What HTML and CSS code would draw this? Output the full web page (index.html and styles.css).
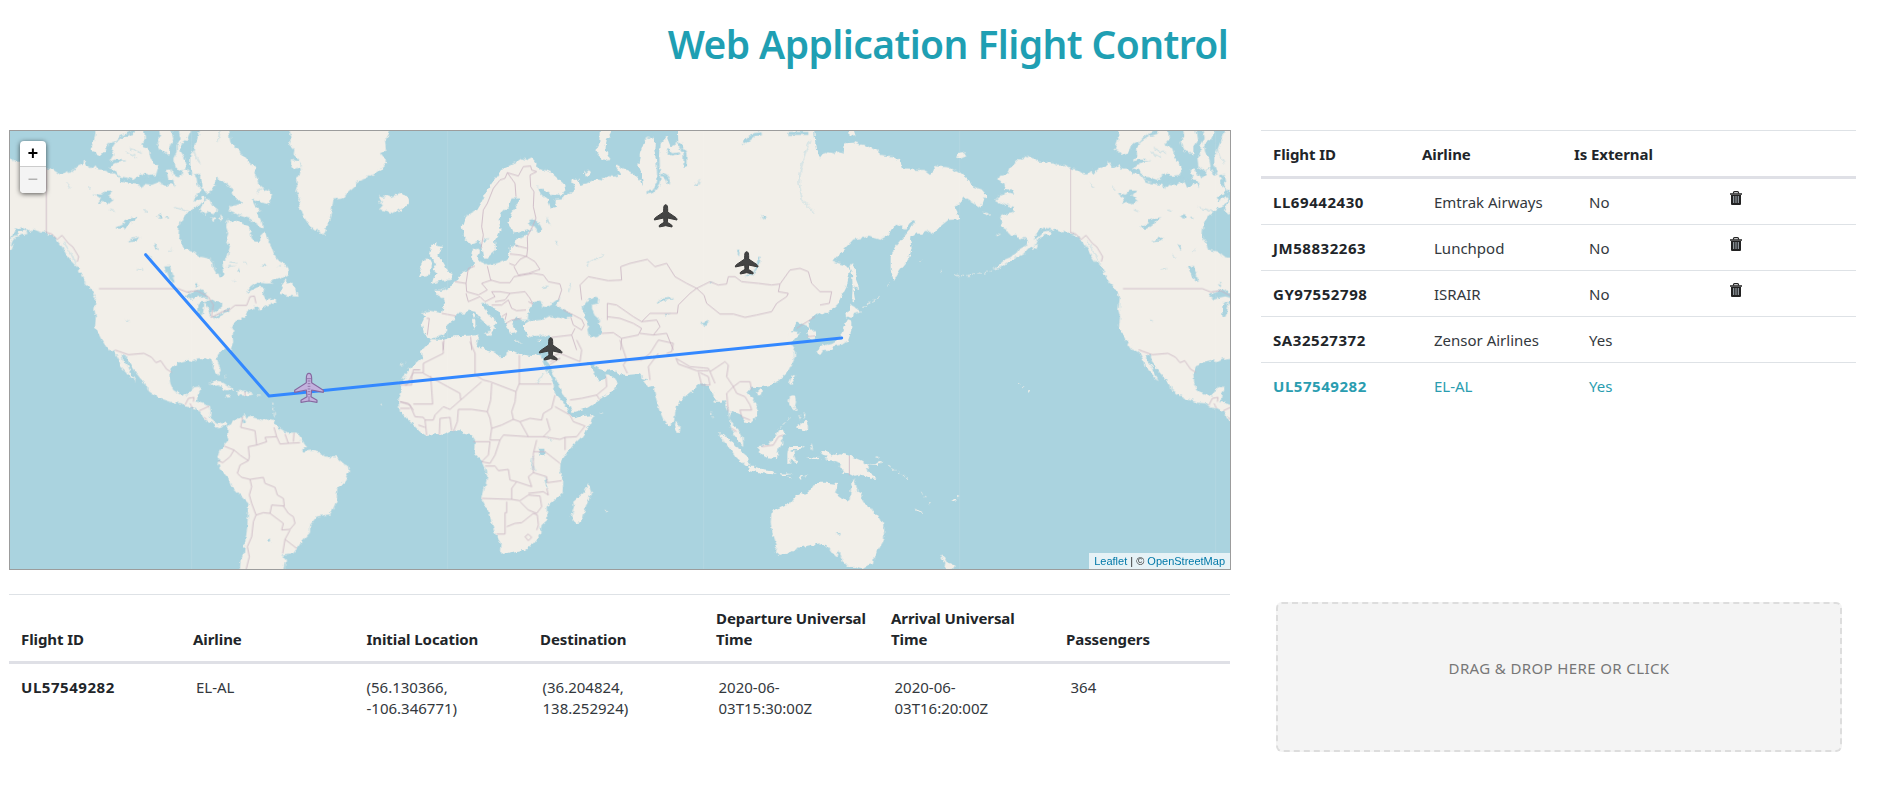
FILE: index.html
```html
<!DOCTYPE html>
<html lang="en">
<head>
<meta charset="utf-8">
<title>Web Application Flight Control</title>
<link rel="stylesheet" href="styles.css">
</head>
<body>
<h1 class="title">Web Application Flight Control</h1>
<main class="layout">
  <section class="left">
    <div class="map">
      <svg class="world" viewBox="30 33 3660 1314" preserveAspectRatio="none">
        <defs>
          <filter id="coast" filterUnits="userSpaceOnUse" x="-120" y="-10" width="3860" height="1380" color-interpolation-filters="sRGB">
            <feTurbulence type="fractalNoise" baseFrequency=".07" numOctaves="2" seed="4"/>
            <feDisplacementMap in="SourceGraphic" scale="15" xChannelSelector="R" yChannelSelector="G"/>
          </filter>
          <g id="america">
            <g class="land">
              <path transform="translate(-612 0)" d="M752 143L735 135 715 137 700 130 690 130 678 125 655 125 650 117 640 115 628 112 620 107 612 114 600 116 580 135 572 142 565 158 555 164 540 168 535 178 548 188 558 195 550 206 575 208 583 224 560 220 540 228 525 240 545 250 560 257 582 260 580 278 555 283 540 290 550 305 543 320 560 330 570 345 590 345 600 360 612 354 625 362 620 375 595 390 590 398 570 412 555 418 540 432 518 450 545 440 560 428 580 418 610 402 625 385 645 375 650 362 660 350 680 345 695 342 688 332 670 335 655 350 640 360 658 330 675 322 700 332 710 328 735 338 753 337z"/>
              <path transform="translate(-612 0)" d="M640 378l15-6-5 14-12 4zM530 340l14 3-10 3zM485 276l15 2 14 8-8 0-16-6z"/>
              <path d="M139 145L160 150 180 163 190 163 205 150 208 160 225 145 250 133 252 122 262 138 275 145 285 135 295 148 320 150 325 160 345 160 355 170 365 185 385 190 415 195 425 208 432 192 455 195 480 185 490 200 500 200 515 190 525 205 520 180 505 178 500 150 512 148 520 165 535 172 545 165 548 150 560 145 570 165 580 160 590 175 592 195 605 205 600 220 578 235 585 245 600 235 610 228 615 235 600 255 580 265 570 275 555 285 538 315 535 350 545 365 552 388 580 395 600 410 625 415 640 425 642 448 650 462 655 460 660 473 670 465 668 440 668 425 682 412 685 400 690 380 678 360 685 340 678 320 683 300 700 306 710 303 728 312 745 318 752 335 755 355 768 365 780 365 782 345 795 338 805 365 818 390 825 410 840 425 855 432 867 450 865 463 845 475 825 480 800 490 770 488 750 503 740 520 755 510 780 500 795 505 790 525 800 543 825 535 830 548 800 556 780 572 775 560 760 562 740 575 735 590 715 600 705 605 692 632 700 665 690 690 325 690 305 660 285 620 288 590 283 570 287 535 278 515 262 490 250 480 235 445 215 425 200 405 185 380 170 360 155 345 139 340z"/>
              <path d="M288 5h105v28L360 50 345 65 325 70 318 90 310 100 295 108 285 95 272 88 285 50zM340 105L335 85 348 65 370 50 400 42 415 5 430 5 435 60 422 75 445 85 452 115 475 140 468 165 445 168 425 160 400 180 380 172 360 170 345 150 328 145 340 132 360 126 380 122 345 118 328 125zM475 5h40v28l5 27-12 20 0 28-13-12-17-5-8-27 10-15zM530 5h42v28l-12 27-20 15 3 20 12 20 5 25-15 12-22-12-3-25 10-20 0-20 12-18zM610 5h75v28l8 40 22 12 8 15 22 25 22 20-4 12 7 15 5 18 20 18 22 12-12 32-22-4-25-10 10 20 16 14-14 5 16 30 3 18-18-12-20-16-38-12-28-12 8-14 32-9-20-20-12-25-20-18-30-18-30-10-30 8-12-30 0-28 14-32zM610 145l30 0 10 20-5 25-10 20-15 10-15-20-5-30zM600 272l12-28 14-8 12 20 17 14-14 10-15-6-12 10zM686 182l16-3 8 12-12 12-12-8zM840 522l6-22 4-16 12-8-2 18 12-4 13 14 8 26-22-2zM790 488l30 4-18-7zM630 290l18 8-8 5zM658 285l10 12-8 6zM250 485l18 4 26 24-14 0z"/>
              <path transform="translate(0 660)" d="M700 -35L697 5 682 18 668 30 655 42 650 55 658 76 662 92 655 104 648 95 640 82 636 65 630 55 605 59 598 54 580 63 560 60 535 68 528 75 515 80 508 100 511 130 520 150 540 163 565 165 575 150 580 142 600 140 600 152 594 160 590 185 605 190 630 198 632 215 630 232 645 245 655 252 665 246 676 248 685 262 672 255 655 262 648 258 638 245 630 250 612 238 600 215 580 205 560 203 545 190 520 188 490 178 460 162 443 150 440 135 425 120 405 95 390 75 380 50 365 42 368 60 385 80 395 105 408 125 395 115 378 95 362 78 358 60 345 36 310 0 290 -35z"/>
            </g>
            <g class="lake">
              <path d="M555 528l18-14 25-5 18 8 10 18-22-6-18 4-15 6zM595 555l12-12 6 10-4 25-6 14-8-6zM612 547l22-8 14 6 16 4-2 14-16 14-10-8-2 20-6-4-2-20zM635 594l32-16 6 2-34 18zM668 574l22-8 2 5-20 8zM492 440l18-2 8 34 4 14-10-4-10-18zM280 220l25 4 12-12 20 0-12 14 16 14-14 10-18-4-18 6 12-16zM350 322l18-8 8-14 20-6 16-2-14 14-16 10-14 10-16 0zM385 365l14-10 24-4-14 10-14 2zM460 372l8 4 6 16-6-2zM583 495l6-6 6 5-6 6zM378 598l12 8-8-2zM680 440l26-4-22 7zM785 435h16l-10 5zM830 440l12-6-8 8zM470 290l14-8 0 12zM495 290l16 2-10 4zM712 455l6-12 0 12z"/>
              <path class="creek" d="M660 33l-6 30M575 70q10 40 25 60M365 178l50 8 40-18 38 12M770 215l18-10 28 10M745 300l28 10M390 85l35 15M380 95l30 18M190 365l20 30 20 40M185 375l15 45M525 262l55 18M200 190l10 15M262 197l12 12M330 270l15 5M430 270l12 4M410 450l20-4M445 405l12 10M505 395l10-8M690 425l22 4M730 425l10 8M700 480l8 8M515 455l8 30"/>
            </g>
          </g>
          <g id="america-borders" class="border">
            <path d="M139 145V337L155 342 172 358 186 346 205 370 218 380 236 410 232 425M297 506H535L560 516 590 512 625 530 640 555 634 592 665 576 690 568 705 556 740 556 750 530 763 528 768 550"/>
            <path transform="translate(0 660)" d="M345 30L385 44 432 40 455 52 468 68 482 62 500 88 516 97M555 195L565 175 582 172 580 185M570 190L578 205M598 212L628 198M612 232L620 238"/>
          </g>
        </defs>
        <g filter="url(#coast)">
        <use href="#america"/>
        <use href="#america" x="3072"/>
        <g class="land">
          <path d="M862 5H1170V33L1155 60 1158 90 1140 100 1160 125 1150 140 1125 160 1100 172 1080 180 1068 188 1065 200 1040 222 1030 235 1000 238 995 270 985 310 970 345 960 340 955 330 945 332 930 320 905 280 895 250 900 235 886 215 892 195 888 180 900 160 905 130 888 108 878 105 880 85 868 75 875 55zM876 120l24 4 4 20-22 6-6-14zM1140 240l-6-12 16 5 6-10 16 8 10-4 20-6 22 8 4 16-18 18-30 18-26-10-14-2 12-14-18-6 14-6z"/>
          <g transform="translate(1200 0)">
            <path d="M72 640L65 610 75 590 65 578 90 572 125 580 132 560 130 535 105 520 104 512 125 512 150 500 160 488 180 470 190 455 208 450 222 432 213 410 216 392 235 385 240 395 230 410 242 425 262 435 290 430 320 418 328 395 330 380 345 378 350 355 380 345 400 325 370 335 338 340 325 310 332 280 355 250 358 235 335 235 325 260 308 275 296 300 302 330 295 345 285 360 288 390 268 408 264 416 250 415 245 385 240 362 215 375 195 355 185 320 195 290 230 270 245 245 265 205 285 175 300 155 330 135 350 125 365 115 380 120 395 112 410 130 408 140 430 150 450 155 490 190 497 210 485 225 450 222 425 205 410 200 425 225 445 240 452 265 470 260 462 240 485 238 490 225 515 220 525 205 512 180 535 175 540 195 560 190 590 175 610 178 620 168 640 170 665 165 645 135 665 142 690 155 720 178 730 200 722 155 715 138 720 100 735 60 750 50 765 60 763 90 770 130 780 110 782 70 800 50 812 80 835 65 832 5H1240L1248 90 1260 115 1275 95 1300 100 1315 95 1330 100 1335 70 1360 65 1375 72 1390 75 1420 85 1438 95 1440 108 1480 112 1500 120 1510 148 1555 150 1570 150 1590 165 1605 150 1602 138 1650 143 1680 160 1700 175 1720 200 1745 208 1762 228 1750 240 1742 262 1725 252 1690 230 1685 245 1665 262 1672 275 1675 298 1645 300 1620 320 1600 340 1585 332 1565 342 1550 340 1530 355 1535 385 1527 415 1500 450 1482 480 1472 450 1472 410 1485 380 1510 350 1535 320 1550 300 1530 308 1515 330 1505 318 1490 312 1465 345 1440 360 1410 350 1360 358 1330 390 1300 425 1335 435 1350 450 1340 500 1315 550 1285 580 1260 578 1240 590 1225 605 1228 620 1245 635 1245 655 1232 660 1222 640 1228 620 1190 605 1185 618 1172 635 1200 640 1185 655 1170 675 1180 700H448L452 650 430 645 385 652 372 630 372 608 385 600 395 598 365 600 350 590 335 605 340 615 350 635 330 642 318 610 305 590 285 565 265 558 255 548 245 552 262 578 290 605 292 612 280 612 285 625 272 645 272 622 245 600 225 575 210 572 195 580 170 580 165 600 140 615 142 628 132 645 110 652 90 655z"/>
            <path d="M95 492L120 482 150 480 158 462 142 452 132 430 115 408 126 380 108 378 110 365 92 380 88 395 95 410 100 425 112 432 100 450 110 460 100 475zM55 470L65 455 60 440 68 422 88 418 94 430 86 465zM600 5h35v28l-15 27-4 30 16 30-22 2-24-28 12-24zM645 130l18 12-10 4zM555 158l10-8 8 6-6 12-10-2zM217 583l6-3 3 12-5 4zM216 600l10 0 0 20-8 6zM250 638l26-2-5 12zM342 662l28 4-20 2zM408 662l18-6-8 10zM0 222l20 8 6 18-26 25z"/>
          </g>
          <g transform="translate(2460 0)">
            <path d="M88 438l10-8 6 12 4 36 10 26-14-4-2 20 4 26-10-6 2-40-2-40zM78 592l-2-12 14-8 0-20 14 10 20 14-22 6-4 12-16-4zM82 600l12 4 0 30-10 28-18 12-22 4-14 12-18 0-14 18-8-14 20-16 26-6 16-10 8-16 10-14zM86 5h16v28l5 15-18 2zM408 112l8-14 16-2 8 12-18 8zM300 424l4-4 2 4zM356 454l8-2 0 4z"/>
            <path class="isles" d="M515 450q-40 20-115 16M210 492l-12 8M180 530l-20 12-35 25"/>
          </g>
          <g transform="translate(0 660)">
            <path d="M683 262L700 240 725 232 735 222 740 234 755 230 790 240 805 236 820 240 825 252 835 262 860 278 890 278 905 300 918 318 905 335 940 332 960 338 975 350 1010 352 1030 370 1043 375 1047 395 1035 420 1012 445 1010 480 1000 505 990 523 970 526 950 530 930 555 930 578 905 605 895 620 880 640 850 643 848 650 858 660 850 710H717L722 660 732 640 736 600 742 560 745 490 720 465 695 440 685 415 660 385 652 368 662 360 652 352 658 335 668 320 685 300 682 285zM625 130l20-8 18 2 18 12 24 14-34 0-8-10-22-8zM710 154l22-2 28 10-20 6-30-4zM676 168l14-1 2 4-12 2zM770 167l12 0 0 3-12 0z"/>
            <path class="isles" d="M818 185l6 50M675 105l5 15M1200 75l18-5M1140 190l10 8"/>
          </g>
          <g transform="translate(1200 660)">
            <path d="M62 35L75 20 92 8 95 -2 130 0 155 -10 180 -12 235 -14 232 5 228 20 250 28 285 38 300 52 318 50 322 32 340 33 358 42 395 48 422 45 428 65 445 100 460 130 465 160 485 180 500 205 510 225 520 235 550 228 580 225 570 255 545 290 520 315 495 345 482 365 480 395 490 420 488 460 465 480 440 500 442 540 425 555 420 585 400 610 375 630 345 633 315 642 300 632 302 610 285 580 270 530 262 510 245 480 255 440 262 410 255 385 245 362 222 338 225 300 215 285 190 282 180 270 150 275 132 285 110 282 80 288 60 275 35 250 15 230 0 215 -5 185 5 150 5 125 20 95 38 78 68 55z"/>
            <path d="M450 -30L448 40 440 60 450 80 458 100 475 130 490 165 510 200 518 217 560 205 600 180 640 150 653 130 640 112 622 102 618 118 600 125 588 110 580 90 558 62 575 65 590 85 615 92 640 90 655 102 680 105 715 102 730 115 745 118 732 125 745 142 760 138 768 175 780 215 795 250 808 258 822 245 828 200 860 165 885 145 905 130 925 140 935 150 945 185 965 185 972 180 985 210 988 240 1000 285 1015 305 1030 318 1028 295 1015 268 1000 255 988 235 993 215 1010 220 1022 225 1035 245 1050 248 1072 225 1075 205 1055 175 1042 155 1055 140 1080 142 1110 135 1135 122 1162 98 1185 50 1185 35 1172 15 1160 0 1165 -20 1178 -30z"/>
            <path d="M565 432L573 455 568 475 560 490 545 545 525 550 513 530 522 500 520 485 550 460zM828 245l14 18-4 12-12 0-3-14zM957 280l14 2 14 14 20 16 18 22 22 18 2 26-10 0-28-26-18-24-18-22zM1045 380l20 0 20 8 30 2 14 14-40-4-44-10zM1075 318l28-3 20-25 12-20 10 0 12 14-12 6 2 20-12 20-4 24-24 2-16-8-8-4zM1162 345l4-22 8-2 36 0-4-4 8 2-10 8-28 0 0 6 14-2-10 12 12 26-6 0-12-16-4 18-8 0zM1170 168l14-2 4 20-4 18 10 8-8 0-16-14-4-16zM1188 260l12-4 2-8 16-6 6 18-2 14-16-6-14-2zM1168 128l8-20 8-4-2 16-8 12zM1068 158l12-10 10 4-6 14-12 0zM1195 225l8 4-2 10zM1208 215l8 10-4 10zM1232 308l6 14 0 14-6-8zM1220 352l40 2-2 4-34-2zM1195 412l32-12-26 16zM1140 400l40 2-36 4zM1160 408l16 6-8 0z"/>
            <path class="isles" d="M1168 235l-30 30M935 215l2 20M600 219h8M615 510l6 3"/>
          </g>
          <g transform="translate(2460 660)">
            <path d="M0 345L5 332 28 335 32 350 45 345 60 340 80 344 100 352 125 362 145 378 140 390 150 400 172 416 150 416 130 402 105 408 90 400 70 398 60 380 62 370 40 362 18 358 20 350zM-146 522L-140 510 -115 500 -90 490 -75 470 -55 458 -48 462 -35 450 -30 452 -15 430 0 428 20 428 52 432 45 460 60 470 80 485 88 480 95 435 100 420 108 432 112 455 122 460 130 490 150 500 160 515 175 530 192 560 192 600 178 625 165 645 162 672 145 675 125 687 100 680 85 682 70 665 58 640 50 652 38 640 25 622 0 610 -60 622 -85 635 -120 648 -135 635 -130 615 -142 580 -148 550zM360 642l12 10 8 14 24 8-4 12-28 2 4-16zM145 376l28 2 14-16-8 2-12 8zM395 482l6-5 6 4-6 5zM285 502l22 18-4 2-16-12zM622 153l6-4 6 6-6 5z"/>
            <path class="isles" d="M205 375l25 20 38 24M165 350l14 4M410 470h6M305 455l10 20M325 490l4 2M592 133h5M606 139l6 2"/>
            <path d="M-2 18l12-4 14-4-4 8-14 6 0 12-8 8z"/>
          </g>
        </g>
        <g class="lake">
          <g transform="translate(1200 0)">
            <path d="M383 598L385 580 397 548 415 543 428 548 425 558 440 562 480 532 475 548 466 555 490 570 520 582 515 592 495 595 470 592 450 588 425 600 400 602zM548 560l14-18 18-10 18 4-2 14-20 4 0 14 8 18 18 16-12 4 14 18 0 18-16 10-22-6-4-18 6-10-14-28zM770 550l14-14 32-2 2 4-28 4-14 8zM392 300l14-4 10 18 10 12-10 12-16-20-14-6zM440 290l12 28-10-14zM1032 468l26-10 20-46 4 2-6 28-24 26zM465 362l8 4 0 8zM900 612l28-10-12 16zM880 195l14-8 8-12-6 14-10 8zM1085 285l14 4-12 10zM790 582l24-2-20 6zM345 378l12 0-8 6zM250 360l14-6-8 14zM930 485l12 2-8 4zM1010 395l10-8-2 20zM428 500l22-4-18 8z"/>
            <path class="gulf" d="M740 218l16-2 18-24 4-22M776 175l-2-60M785 164q25 10 20 28M835 70l20 30 0 40M800 90l15 15 25-4M1030 70l30-25 25-4M1165 40h60"/>
            <path class="creek" d="M1232 60q-30 60-35 130l10 50 35 38M560 440q5-25 30-22l20-15M395 310l10-15M505 520l8-30"/>
          </g>
          <g transform="translate(1200 660)">
            <path d="M415 326l18 0 0 18-14 4zM396 360l4 30 6 10-10-20zM436 405l6 30-2 14-6-30z"/>
            <path class="creek" d="M430 100l-18 32M400 345l-5 20 10 30M445 290l10 12"/>
          </g>
          <path d="M728 900l6-4 4 8-6 6zM804 1260l6-4 4 6-6 4z"/>
          <path transform="translate(2460 660)" d="M50 582l8-4 2 6zM52 640l6-10 0 18z"/>
        </g>
        </g>
        <use href="#america-borders"/>
        <use href="#america-borders" x="3072"/>
        <g class="border">
          <g transform="translate(1200 0)">
            <path d="M243 385L250 345 245 320 250 270 262 250 280 205 300 180 315 175 322 158 345 190 348 230M322 158L355 168 370 140 392 138 395 150 410 155 390 165 392 200 402 215 400 260 408 295 395 325 382 350 383 385 380 410 360 405 330 402M345 376L382 385M328 430L345 437 360 418 380 408M380 410L405 425 420 448 385 460 355 465 342 440M262 438L272 480 300 488 330 488 342 470M225 438L205 445 198 490 200 515 235 525 262 510 245 490 275 480M165 485L198 490M205 545L198 520M205 545L240 530 255 545 285 530 275 515 300 515 330 520 315 540 285 545M342 470L400 460 430 465 445 485 480 492 485 510 475 540M330 520L375 515 390 535 398 552 385 545M275 555L305 555 325 540 335 565 350 572 378 570M318 610L335 600 365 595M305 590L320 580 315 600M125 580L168 588M80 595H88L82 645M130 690L132 660M212 650L215 690M545 540L540 495 565 470 590 475 625 482 665 480 662 440 690 430 742 418 765 440 800 430 825 470 860 490 890 505 870 520 835 555 832 580 750 580 725 605 700 590 650 555 622 550V600M890 505L930 485 955 495 980 492 985 470 1005 470 1025 485 1075 490 1115 495 1140 492 1135 515 1165 520 1160 530 1130 550 1115 575 1070 585 1035 592 1000 582 960 582 920 550 912 525 890 505M1140 492L1170 450 1200 445 1225 455 1235 490 1260 515 1295 515 1288 550 1260 555M605 640L640 638 665 655 715 645 725 625 700 610 660 595 622 590M725 605L770 600 780 620 760 645 720 640M760 645L800 640 820 690M490 570L520 585 545 598 553 615 545 630 520 615 512 590M455 652L515 645 525 625M515 645L530 690M455 652V690M665 655L662 690M1190 625L1245 590M1222 650L1245 648"/>
          </g>
          <g transform="translate(1200 660)">
            <path d="M70 100L180 160 182 180 150 208 130 200 105 225 100 240H75L70 232 45 230 30 195 0 185M40 98H70V70L130 40 128 5M92 108L98 192 40 192M0 135H20L40 98M210 5L225 40V105L250 120 270 125 348 155 358 130V45M358 132H455M182 180L245 125M275 130L272 180 262 215 215 208 175 208 172 245 160 275M348 155L345 185 335 215 340 238 305 255 275 265 270 235 262 215M340 238L360 245 390 235 425 240 430 220 455 205 465 165M360 245L385 290 430 290 450 270 440 235M465 200L510 225 520 245 555 258 530 290 495 292 480 298 430 290M495 292V330M275 265L270 300 300 300 310 285 385 290M220 305H270L265 345 245 365 270 370 285 345 300 300M255 378H285L295 392 325 388 330 420 350 425 335 445 335 478 245 475M350 425L395 440 385 410 400 398 400 340 410 300M400 335H435L480 370M400 398L440 410 442 428 485 422M385 460L430 455 445 465 440 445M335 478L360 482 385 465 420 468 425 500 410 520 385 510 360 485M320 485V518H315V582L290 582M320 560L345 550 365 548 400 520 412 525 415 555 410 570M375 590L385 582 395 592 385 602zM118 285L120 235 150 232 155 272M75 240L80 285M55 255L75 262M448 75L480 55 450 65M455 50L480 40 540 65M540 65L545 30 530 0M510 180L545 175 590 165 620 140 618 110M590 165L600 180M660 0L680 60 670 75 682 100M680 60L725 60 750 40 775 0 820 10 815 35 800 40M775 40L745 80 750 120M828 55L870 80 925 85 930 95 975 65 985 75 980 110 1000 140 980 160 985 215M828 55L835 72 890 92 925 92M895 95L905 135 930 135 925 110 900 98M930 95L945 130M1000 140L1020 125 1050 125 1055 150M1000 140L1010 160 1035 170 1050 195 1055 210 1020 210 1025 230 1050 240M1085 320L1120 315 1135 290 1150 285M995 265L1010 275"/>
          </g>
          <g transform="translate(0 660)">
            <path d="M728 230L722 262 765 272 770 315 745 320 748 350 745 362 720 345 702 330 672 318M702 330L690 350 668 368 655 362M745 362L720 375 712 400 725 412 750 418 790 412 795 430 825 442 832 465 850 475 853 498 815 495 810 520 790 518 768 525 755 490 748 465 755 440 750 418M768 525L760 545 755 590 742 620 748 650 738 690M810 520L850 550 845 570 870 568 885 550 880 530 865 520 850 498M870 570L855 598 890 625M855 598L848 640M770 315L800 305 795 292 830 290 840 312 865 310 855 282M830 290L822 262M865 310L900 308M882 278L880 305M735 155V168M1200 185L1225 190 1240 210M1200 205H1230M1215 135H1235V110L1240 90H1260"/>
          </g>
          <path transform="translate(2460 660)" d="M88 348V406"/>
        </g>
        <path class="seam" d="M575 33V1347M1343 33V1347M2111 33V1347M2879 33V1347M3647 33V1347"/>
        <path class="route" d="M437 404L807 828 2525 654"/>
        <defs>
          <path id="plane" d="M0-34C4-34 6-29 6-22V-12L31 5Q34 7 34 12L6 6 5 19 18 27Q20 29 19 33L0 29-19 33Q-20 29-18 27L-5 19-6 6-34 12Q-34 7-31 5L-6-12V-22C-6-29-4-34 0-34z"/>
        </defs>
        <use class="plane" href="#plane" x="1997" y="288"/>
        <use class="plane" href="#plane" x="2240" y="429"/>
        <use class="plane" href="#plane" x="1652" y="687"/>
        <g class="plane-active" transform="translate(927 803)">
          <path d="M0-43C6-43 8-35 8-28V-15L43 8V14L8 7 6 27 24 38V44L0 40-24 44V38L-6 27-8 7-43 14V8L-8-15V-28C-8-35-6-43 0-43z"/>
          <path class="ribs" d="M-8-27H8M-4-20H4M-4-12H4M-4-4H4M-4 4H4M-4 12H4M-4 20H4M0 26V40"/>
        </g>
      </svg>
      <div class="zoom"><span class="zoom-in">+</span><span class="zoom-out">−</span></div>
      <div class="credit"><a>Leaflet</a> | © <a>OpenStreetMap</a></div>
    </div>
    <div class="details">
      <div class="d-row d-head"><span>Flight ID</span><span>Airline</span><span>Initial Location</span><span>Destination</span><span>Departure Universal<br>Time</span><span>Arrival Universal<br>Time</span><span>Passengers</span></div>
      <div class="d-row d-body"><b>UL57549282</b><span>EL-AL</span><span>(56.130366,<br>-106.346771)</span><span>(36.204824,<br>138.252924)</span><span>2020-06-<br>03T15:30:00Z</span><span>2020-06-<br>03T16:20:00Z</span><span>364</span></div>
    </div>
  </section>
  <section class="right">
    <div class="flights">
      <div class="f-row f-head"><span>Flight ID</span><span>Airline</span><span>Is External</span></div>
      <div class="f-row"><b>LL69442430</b><span>Emtrak Airways</span><span>No</span><svg class="trash" viewBox="0 0 12 14"><path class="handle" d="M3.5 2.5V1.5Q3.5 .6 4.5 .6H7.5Q8.5 .6 8.5 1.5V2.5"/><path d="M0 2.2H12V3.8H0zM1 4H11V13Q11 14 10 14H2Q1 14 1 13z"/><path class="slot" d="M3.7 5V12M6 5V12M8.3 5V12"/></svg></div>
      <div class="f-row"><b>JM58832263</b><span>Lunchpod</span><span>No</span><svg class="trash" viewBox="0 0 12 14"><path class="handle" d="M3.5 2.5V1.5Q3.5 .6 4.5 .6H7.5Q8.5 .6 8.5 1.5V2.5"/><path d="M0 2.2H12V3.8H0zM1 4H11V13Q11 14 10 14H2Q1 14 1 13z"/><path class="slot" d="M3.7 5V12M6 5V12M8.3 5V12"/></svg></div>
      <div class="f-row"><b>GY97552798</b><span>ISRAIR</span><span>No</span><svg class="trash" viewBox="0 0 12 14"><path class="handle" d="M3.5 2.5V1.5Q3.5 .6 4.5 .6H7.5Q8.5 .6 8.5 1.5V2.5"/><path d="M0 2.2H12V3.8H0zM1 4H11V13Q11 14 10 14H2Q1 14 1 13z"/><path class="slot" d="M3.7 5V12M6 5V12M8.3 5V12"/></svg></div>
      <div class="f-row"><b>SA32527372</b><span>Zensor Airlines</span><span>Yes</span></div>
      <div class="f-row selected"><b>UL57549282</b><span>EL-AL</span><span>Yes</span></div>
    </div>
    <div class="drop">DRAG &amp; DROP HERE OR CLICK</div>
  </section>
</main>
</body>
</html>
```
FILE: styles.css
```css
* { box-sizing: border-box; }
body {
  margin: 0;
  height: 797px;
  overflow: hidden;
  background: #fff;
  color: #212529;
  font: 15px/21px "Noto Sans", "Open Sans", sans-serif;
}
.title {
  margin: 0;
  height: 130px;
  padding: 20px 0 0 12px;
  text-align: center;
  font-size: 39px;
  line-height: 48px;
  font-weight: 600;
  letter-spacing: -.6px;
  color: #1f9fb3;
}
.layout {
  display: grid;
  grid-template-columns: 1222px 595px;
  column-gap: 30px;
  padding-left: 9px;
}
.left, .right { display: flex; flex-direction: column; }
.left { gap: 24px; }
.map {
  position: relative;
  height: 440px;
  border: 1px solid #9c9c9c;
  background: #aad3df;
}
.world { display: block; width: 100%; height: 100%; background: #aad3df; }
.land { fill: #f2efe9; }
.lake { fill: #aad3df; }
.creek { fill: none; stroke: #aad3df; stroke-width: 2; }
.gulf { fill: none; stroke: #aad3df; stroke-width: 9; stroke-linejoin: round; }
.isles { fill: none; stroke: #f2efe9; stroke-width: 3; stroke-dasharray: 10 7; }
.border { fill: none; stroke: #c9b4c1; stroke-width: 2.4; stroke-linejoin: round; }
.seam { fill: none; stroke: #fff; stroke-opacity: .1; stroke-width: 3; }
.route { fill: none; stroke: #3388ff; stroke-width: 9; stroke-linecap: round; stroke-linejoin: round; }
.plane { fill: #444; stroke: #383838; stroke-width: 3; stroke-linejoin: round; }
.plane-active { fill: #c3b2de; stroke: #86689f; stroke-width: 3.4; stroke-linejoin: round; }
.plane-active .ribs { stroke-width: 2.4; }
.zoom {
  position: absolute;
  left: 10px;
  top: 10px;
  width: 26px;
  border-radius: 4px;
  background: #fff;
  box-shadow: 0 1px 5px rgba(0, 0, 0, .65);
  text-align: center;
  font: bold 18px/26px "Liberation Mono", monospace;
  color: #000;
}
.zoom span { display: block; height: 26px; }
.zoom-in { border-bottom: 1px solid #ccc; }
.zoom .zoom-out { font-weight: normal; background: #f4f4f4; color: #aaa; border-radius: 0 0 4px 4px; }
.credit {
  position: absolute;
  right: 0;
  bottom: 0;
  height: 16px;
  padding: 0 5px;
  background: rgba(255, 255, 255, .7);
  color: #333;
  font: 11px/16px "Liberation Sans", sans-serif;
}
.credit a { color: #0078a8; }
.details { width: 1221px; border-top: 1px solid #dee2e6; }
.d-row { display: grid; padding-left: 12px; }
.d-row span, .f-row span { color: #33383d; }
.d-head {
  grid-template-columns: 172px 173.5px 173.5px 176px 175px 175px 1fr;
  align-items: end;
  height: 69px;
  padding-bottom: 11px;
  border-bottom: 3px solid #dfe0e6;
  font-weight: 700;
}
.d-body { grid-template-columns: 175px 170.5px 176px 176px 176px 176px 1fr; padding-top: 13px; }
.d-row.d-head span, .f-row.f-head span { color: #212529; letter-spacing: -.08px; }
b { letter-spacing: .55px; }
.flights { height: 472px; border-top: 1px solid #dee2e6; }
.f-row {
  display: grid;
  grid-template-columns: 161px 155px 141px 1fr;
  height: 46px;
  padding: 12px 0 0 12px;
  border-top: 1px solid #dee2e6;
}
.f-row b, .f-row span { padding-top: 1px; }
.f-head {
  grid-template-columns: 149px 152px 1fr;
  height: 48px;
  border-top: 0;
  border-bottom: 3px solid #dfe0e6;
  font-weight: 700;
}
.f-head + .f-row { height: 45px; border-top: 0; }
.selected, .f-row.selected span { color: #2a9db0; }
.trash { width: 12px; height: 14px; fill: #222; }
.trash .handle { fill: none; stroke: #222; stroke-width: 1.2; }
.trash .slot { fill: none; stroke: #b9c4cc; stroke-width: .9; }
.drop {
  width: 566px;
  height: 150px;
  margin-left: 15px;
  padding-top: 54px;
  border: 2px dashed #ddd;
  border-radius: 6px;
  background: #f4f4f4;
  color: #777;
  text-align: center;
  letter-spacing: .38px;
}
```
